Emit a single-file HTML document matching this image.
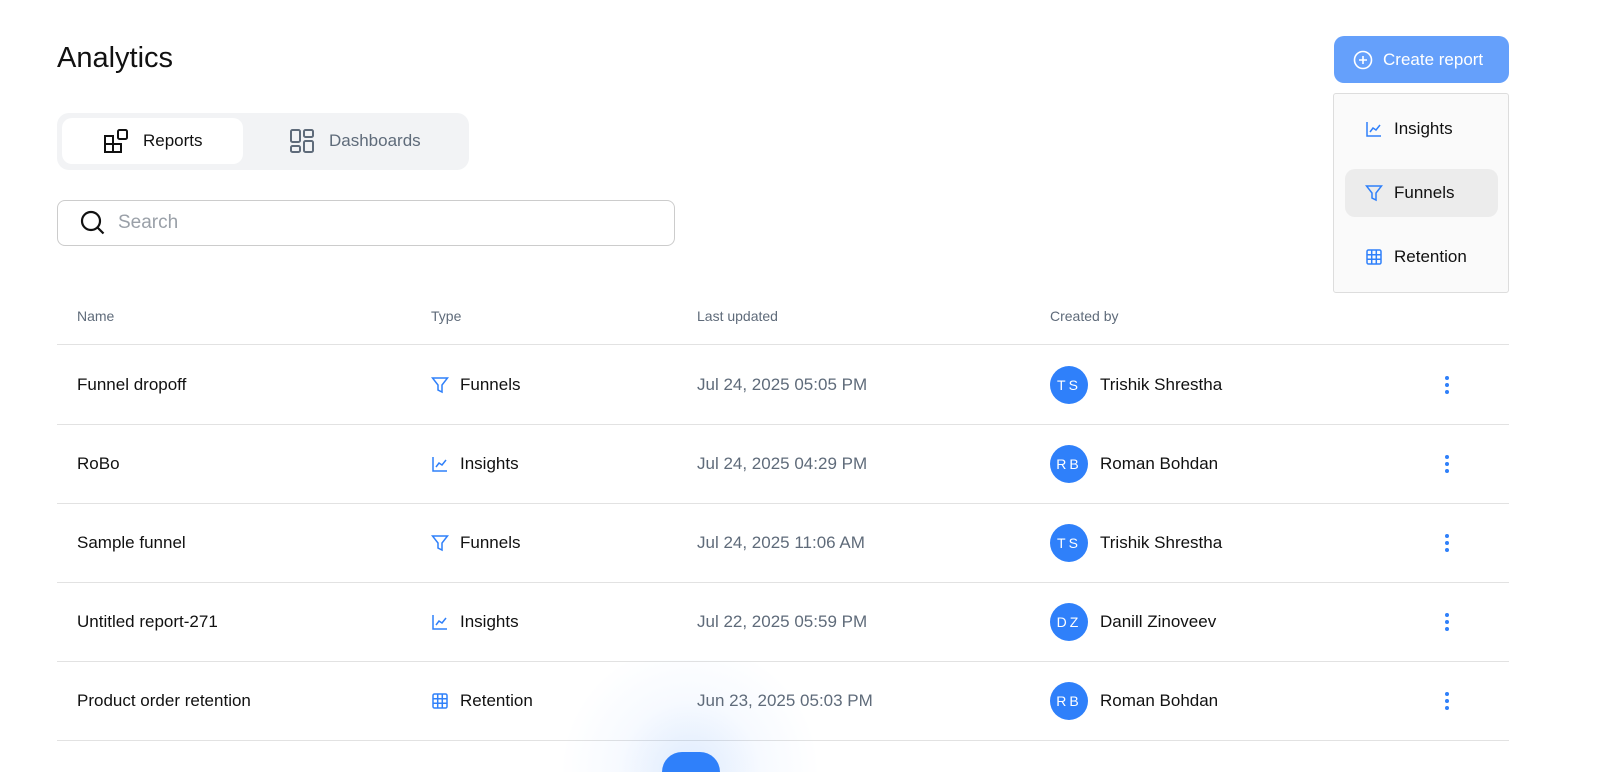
<!DOCTYPE html>
<html><head><meta charset="utf-8"><style>
*{box-sizing:border-box;margin:0;padding:0}
html{width:1600px;height:772px;overflow:hidden}
body{width:1600px;height:772px;overflow:hidden;background:#fff;font-family:"Liberation Sans",sans-serif;color:#111;position:relative}
.abs{position:absolute}
h1{position:absolute;left:57px;top:42px;font-size:29px;font-weight:400;color:#111}
.btn{left:1334px;top:36px;width:175px;height:47px;background:#65a0fb;border-radius:10px;color:#fff;font-size:17px;display:flex;align-items:center;padding-left:19px;gap:10px}
.menu{left:1333px;top:93px;width:176px;height:200px;background:#fafafa;border:1px solid #ddd;border-radius:3px}
.mi{position:absolute;left:11px;width:153px;height:48px;display:flex;align-items:center;padding-left:20px;gap:11px;font-size:17px;border-radius:10px}
.tabs{left:57px;top:113px;width:412px;height:57px;background:#f2f3f5;border-radius:12px}
.tab{position:absolute;top:5px;height:46px;display:flex;align-items:center;gap:14px;font-size:17px}
.search{left:57px;top:200px;width:618px;height:46px;border:1px solid #ccc;border-radius:8px;display:flex;align-items:center;padding-left:22px;gap:12px;font-size:19px;color:#9aa0a8}
.th{top:308px;font-size:14px;color:#5f6b7a}
.line{left:57px;width:1452px;height:1px;background:#e2e2e2}
.row{left:57px;width:1452px;height:79px}
.row>div{position:absolute;top:0;height:79px;display:flex;align-items:center;font-size:17px}
.av{width:38px;height:38px;border-radius:50%;background:#2f80fa;color:#fff;font-size:14px;display:flex;align-items:center;justify-content:center;letter-spacing:3px;margin-right:12px}
.dots{width:4px}
.dots i{display:block;width:4px;height:4px;border-radius:50%;background:#2f80fa;margin:3px 0}
</style></head><body>
<h1>Analytics</h1>
<div class="abs btn"><svg width="20" height="20" viewBox="0 0 20 20" fill="none" stroke="#fff" stroke-width="1.6"><circle cx="10" cy="10" r="8.5"/><path d="M10 6v8M6 10h8"/></svg>Create report</div>
<div class="abs menu">
 <div class="mi" style="top:11px"><svg width="18" height="18" viewBox="0 0 18 18" fill="none" stroke="#2f80fa" stroke-width="1.5"><path d="M2 2v14h14M5 12l3-4 3 2 4-5"/></svg>Insights</div>
 <div class="mi" style="top:75px;background:#ececec"><svg width="18" height="18" viewBox="0 0 18 18" fill="none" stroke="#2f80fa" stroke-width="1.5"><path d="M1.5 2h15l-5.5 7v7l-4-2V9z"/></svg>Funnels</div>
 <div class="mi" style="top:139px"><svg width="18" height="18" viewBox="0 0 18 18" fill="none" stroke="#2f80fa" stroke-width="1.5"><rect x="2" y="2" width="14" height="14" rx="1.5"/><path d="M2 6.7h14M2 11.3h14M6.7 2v14M11.3 2v14"/></svg>Retention</div>
</div>
<div class="abs tabs">
 <div class="tab" style="left:5px;width:181px;background:#fff;border-radius:10px;padding-left:41px"><svg width="26" height="26" viewBox="0 0 26 26" fill="none" stroke="#111" stroke-width="2"><path d="M2 8h8v8H2zM10 16h8v8h-8zM2 16h8v8H2z"/><rect x="15" y="2" width="9" height="9" rx="1.5"/></svg>Reports</div>
 <div class="tab" style="left:232px;color:#5f6b7a"><svg width="26" height="26" viewBox="0 0 26 26" fill="none" stroke="#5f6b7a" stroke-width="2"><rect x="2" y="2" width="9" height="12" rx="1.5"/><rect x="15" y="2" width="9" height="7" rx="1.5"/><rect x="2" y="18" width="9" height="6" rx="1.5"/><rect x="15" y="13" width="9" height="11" rx="1.5"/></svg>Dashboards</div>
</div>
<div class="abs search"><svg width="26" height="26" viewBox="0 0 26 26" fill="none" stroke="#111" stroke-width="2.2"><circle cx="11" cy="11" r="9"/><path d="M17.5 17.5l6 6"/></svg>Search</div>
<div class="abs th" style="left:77px">Name</div>
<div class="abs th" style="left:431px">Type</div>
<div class="abs th" style="left:697px">Last updated</div>
<div class="abs th" style="left:1050px">Created by</div>
<div class="abs line" style="top:344px"></div>
<div class="abs line" style="top:424px"></div>
<div class="abs line" style="top:503px"></div>
<div class="abs line" style="top:582px"></div>
<div class="abs line" style="top:661px"></div>
<div class="abs line" style="top:740px"></div>
<div class="abs" style="left:560px;top:660px;width:260px;height:112px;background:radial-gradient(ellipse 130px 130px at 50% 100%,rgba(47,128,250,.16),rgba(47,128,250,.04) 55%,rgba(255,255,255,0) 100%)"></div>
<div class="abs" style="left:662px;top:752px;width:58px;height:20px;border-radius:29px 29px 0 0;background:#2f80fa"></div>
<div id="rows"></div>
<script>
var F='<svg width="18" height="18" viewBox="0 0 18 18" fill="none" stroke="#2f80fa" stroke-width="1.5"><path d="M1.5 2h15l-5.5 7v7l-4-2V9z"/></svg>';
var I='<svg width="18" height="18" viewBox="0 0 18 18" fill="none" stroke="#2f80fa" stroke-width="1.5"><path d="M2 2v14h14M5 12l3-4 3 2 4-5"/></svg>';
var R='<svg width="18" height="18" viewBox="0 0 18 18" fill="none" stroke="#2f80fa" stroke-width="1.5"><rect x="2" y="2" width="14" height="14" rx="1.5"/><path d="M2 6.7h14M2 11.3h14M6.7 2v14M11.3 2v14"/></svg>';
var d=[["Funnel dropoff",F,"Funnels","Jul 24, 2025 05:05 PM","TS","Trishik Shrestha"],
["RoBo",I,"Insights","Jul 24, 2025 04:29 PM","RB","Roman Bohdan"],
["Sample funnel",F,"Funnels","Jul 24, 2025 11:06 AM","TS","Trishik Shrestha"],
["Untitled report-271",I,"Insights","Jul 22, 2025 05:59 PM","DZ","Danill Zinoveev"],
["Product order retention",R,"Retention","Jun 23, 2025 05:03 PM","RB","Roman Bohdan"]];
var h='';d.forEach(function(r,i){h+='<div class="abs row" style="top:'+(345+i*79)+'px"><div style="left:20px">'+r[0]+'</div><div style="left:374px;gap:11px">'+r[1]+r[2]+'</div><div style="left:640px;color:#5f6b7a">'+r[3]+'</div><div style="left:993px"><span class="av">'+r[4]+'</span>'+r[5]+'</div><div style="left:1388px"><span class="dots"><i></i><i></i><i></i></span></div></div>'});
document.getElementById('rows').innerHTML=h;
</script>
</body></html>
